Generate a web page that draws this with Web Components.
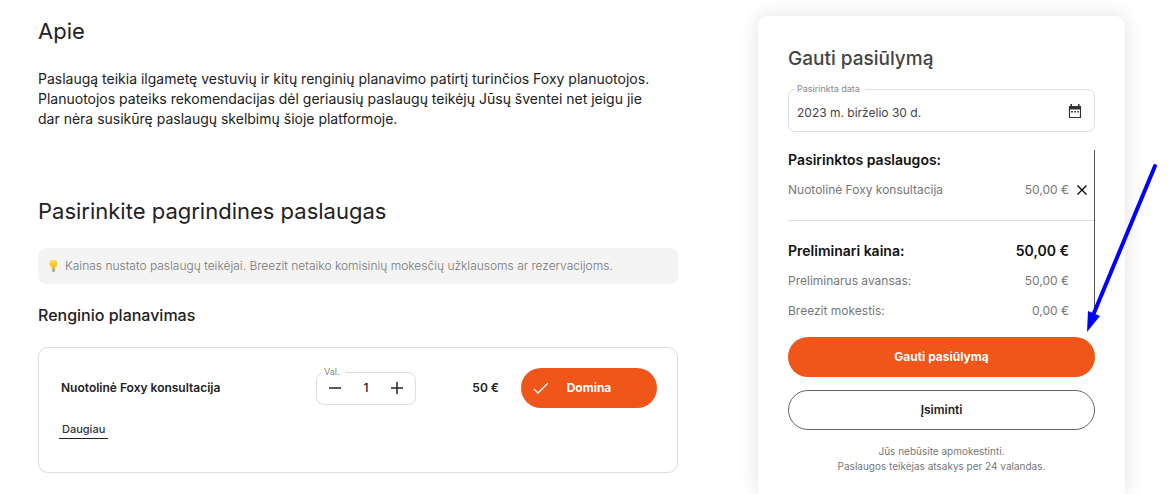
<!DOCTYPE html>
<html lang="lt">
<head>
<meta charset="utf-8">
<meta name="viewport" content="width=device-width, initial-scale=1">
<title>Foxy konsultacija</title>
<style>
  body { margin: 0; background: #fff; color: #222; font-family: Inter, "Liberation Sans", sans-serif; font-size: 12px; line-height: 20px; }
</style>
</head>
<body>
<offer-page>
  <text-section heading="Apie">Paslaugą teikia ilgametę vestuvių ir kitų renginių planavimo patirtį turinčios Foxy planuotojos.<br>Planuotojos pateiks rekomendacijas dėl geriausių paslaugų teikėjų Jūsų šventei net jeigu jie<br>dar nėra susikūrę paslaugų skelbimų šioje platformoje.</text-section>
  <service-group>
    <span slot="heading">Pasirinkite pagrindines paslaugas</span>
    <info-note slot="note">Kainas nustato paslaugų teikėjai. Breezit netaiko komisinių mokesčių užklausoms ar rezervacijoms.</info-note>
    <span slot="category">Renginio planavimas</span>
    <service-card price="50 €" action="Domina">Nuotolinė Foxy konsultacija</service-card>
  </service-group>
  <quote-card slot="aside">
    <span slot="heading">Gauti pasiūlymą</span>
    <date-field slot="date" label="Pasirinkta data" value="2023 m. birželio 30 d."></date-field>
    <price-line slot="items" removable amount="50,00 €">Nuotolinė Foxy konsultacija</price-line>
    <price-line slot="totals" strong amount="50,00 €">Preliminari kaina:</price-line>
    <price-line slot="totals" amount="50,00 €">Preliminarus avansas:</price-line>
    <price-line slot="totals" amount="0,00 €">Breezit mokestis:</price-line>
    <pill-button slot="actions">Gauti pasiūlymą</pill-button>
    <pill-button slot="actions" outlined>Įsiminti</pill-button>
    <span slot="footnote">Jūs nebūsite apmokestinti.<br>Paslaugos teikėjas atsakys per 24 valandas.</span>
  </quote-card>
</offer-page>

<script>
const define = (name, markup, setup) => {
  const template = document.createElement('template');
  template.innerHTML = markup;
  customElements.define(name, class extends HTMLElement {
    constructor() {
      super();
      this.attachShadow({ mode: 'open' }).append(template.content.cloneNode(true));
    }
    connectedCallback() {
      if (setup) setup(this, selector => this.shadowRoot.querySelector(selector));
    }
  });
};

define('offer-page', `
  <style>
    :host { display: grid; grid-template-columns: minmax(0, 1fr) 367px; column-gap: 80px; box-sizing: border-box; min-height: 100vh; padding: 16px 48px 0 38px; }
    @media (max-width: 900px) { :host { grid-template-columns: minmax(0, 1fr); row-gap: 32px; padding: 16px; } }
  </style>
  <main><slot></slot></main>
  <slot name="aside"></slot>`);

define('text-section', `
  <style>
    :host { display: block; }
    h2 { margin: 0 0 23px; font-size: 22px; line-height: 30px; font-weight: 400; }
    p { margin: 0; font-size: 14px; line-height: 20px; }
  </style>
  <h2></h2><p><slot></slot></p>`,
  (host, $) => { $('h2').textContent = host.getAttribute('heading'); });

define('service-group', `
  <style>
    :host { display: block; margin-top: 67px; }
    h2 { margin: 0 0 22px; font-size: 22px; line-height: 30px; font-weight: 400; }
    h3 { margin: 19px 0 20px; font-size: 16px; line-height: 24px; font-weight: 500; }
  </style>
  <h2><slot name="heading"></slot></h2>
  <slot name="note"></slot>
  <h3><slot name="category"></slot></h3>
  <slot></slot>`);

define('info-note', `
  <style>
    :host { display: flex; align-items: center; gap: 6px; padding: 8px 10px; border-radius: 8px; background: #f4f4f4; color: #777; font-size: 12px; line-height: 20px; font-weight: 300; }
    svg { flex: none; }
  </style>
  <svg width="11" height="14" viewBox="0 0 11 14" aria-hidden="true">
    <path d="M5.500 1a4 4 0 0 0-4 4c0 2 1.900 2.700 2.200 5h3.600c.3-2.300 2.200-3 2.200-5a4 4 0 0 0-4-4z" fill="#fccb38"/>
    <path d="M4 3.200a2 2 0 0 1 2-1" stroke="#fff0a0" fill="none"/>
    <path d="M4.600 6.500l.9 1 .9-1M5.500 7.500V10" stroke="#d79b20" stroke-width=".6" fill="none"/>
    <path d="M3.900 10h3.200v2l-1 1H4.900l-1-1z" fill="#a4a9ad"/>
  </svg>
  <span><slot></slot></span>`);

define('quantity-stepper', `
  <style>
    :host { display: block; position: relative; box-sizing: border-box; height: 33px; border: 1px solid #ddd; border-radius: 8px; }
    label { position: absolute; top: -8px; left: 5px; padding: 0 6px 0 2px; background: #fff; color: #888; font-size: 9px; line-height: 14px; font-weight: 400; }
    div { display: grid; grid-template-columns: 36px 1fr 36px; align-items: center; height: 100%; }
    button { display: grid; place-items: center; height: 31px; padding: 0; border: 0; background: none; color: #222; }
    input { width: 100%; min-width: 0; box-sizing: border-box; padding: 0; border: 0; background: none; font: 500 12px/20px Inter, sans-serif; color: #222; text-align: center; }
  </style>
  <label for="count">Val.</label>
  <div>
    <button type="button" aria-label="Mažiau"><svg width="14" height="14"><path d="M1 7h12" stroke="currentColor" stroke-width="1.500"/></svg></button>
    <input id="count" value="1" inputmode="numeric">
    <button type="button" aria-label="Daugiau"><svg width="14" height="14"><path d="M1 7h12M7 1v12" stroke="currentColor" stroke-width="1.500"/></svg></button>
  </div>`,
  (host, $) => {
    const [minus, plus] = host.shadowRoot.querySelectorAll('button');
    const input = $('input');
    minus.onclick = () => { input.value = Math.max(1, Number(input.value) - 1); };
    plus.onclick = () => { input.value = Number(input.value) + 1; };
  });

define('service-card', `
  <style>
    :host { display: block; box-sizing: border-box; min-height: 126px; padding: 20px; border: 1px solid #ddd; border-radius: 10px; }
    .row { display: grid; grid-template-columns: minmax(0, 1fr) 100px 61px 136px; column-gap: 22px; align-items: center; font-weight: 600; }
    .name { padding-left: 2px; }
    .price { text-align: right; }
    a { display: inline-block; margin-top: 12px; padding: 0 3px; border-bottom: 1px solid #222; color: #333; font-size: 11px; line-height: 18px; font-weight: 500; text-decoration: none; }
  </style>
  <div class="row">
    <span class="name"><slot></slot></span>
    <quantity-stepper></quantity-stepper>
    <span class="price"></span>
    <pill-button checked></pill-button>
  </div>
  <a href="#daugiau">Daugiau</a>`,
  (host, $) => {
    $('.price').textContent = host.getAttribute('price');
    $('pill-button').textContent = host.getAttribute('action');
  });

define('pill-button', `
  <style>
    :host { display: block; }
    button { display: flex; align-items: center; justify-content: center; width: 100%; height: 40px; padding: 0 12px; border: 0; border-radius: 20px; background: #f05519; color: #fff; font: 700 12px/20px Inter, sans-serif; cursor: pointer; }
    svg { display: none; flex: none; }
    :host([outlined]) button { border: 1px solid #666; background: #fff; color: #222; font-weight: 600; }
    :host([checked]) svg { display: block; }
    :host([checked]) span { flex: 1; padding-right: 16px; }
  </style>
  <button type="button"><svg width="16" height="14" viewBox="0 0 16 14" aria-hidden="true"><path d="M1 8l4 4L15 2" fill="none" stroke="#fff" stroke-width="1.300"/></svg><span><slot></slot></span></button>`);

define('date-field', `
  <style>
    :host { display: flex; align-items: center; position: relative; box-sizing: border-box; height: 43px; padding: 2px 12px 0 8px; border: 1px solid #ddd; border-radius: 7px; }
    label { position: absolute; top: -8px; left: 6px; padding: 0 5px 0 2px; background: #fff; color: #888; font-size: 9px; line-height: 14px; }
    input { flex: 1; min-width: 0; padding: 2px 0 0; border: 0; background: none; font: 400 12px/20px Inter, sans-serif; color: #444; }
    svg { flex: none; }
  </style>
  <label for="date"></label>
  <input id="date" type="text">
  <svg width="14" height="15" viewBox="0 0 14 15" aria-hidden="true">
    <path d="M1.500 2.500h11v11h-11z" fill="none" stroke="#333" stroke-width="1.200" stroke-linejoin="round"/>
    <path d="M1 2h12v3.500H1zM2.500 0h1.500v2H2.500zM10 0h1.500v2H10z" fill="#333"/>
    <path d="M3 7h2v1.500H3zM6 7h2v1.500H6zM9 7h2v1.500H9z" fill="#555"/>
  </svg>`,
  (host, $) => {
    $('label').textContent = host.getAttribute('label');
    $('input').value = host.getAttribute('value');
  });

define('price-line', `
  <style>
    :host { display: grid; grid-template-columns: minmax(0, 1fr) auto 25px; align-items: center; color: #777; font-size: 12px; line-height: 20px; }
    :host([strong]) { color: #111; font-size: 14px; font-weight: 600; }
    button { display: none; height: 20px; padding: 0; border: 0; background: none; color: #000; }
    :host([removable]) button { display: grid; place-items: center; }
  </style>
  <span><slot></slot></span><span class="amount"></span>
  <button type="button" aria-label="Pašalinti"><svg width="10" height="10"><path d="M.5.5l9 9M9.500.5l-9 9" stroke="currentColor" stroke-width="1.300"/></svg></button>`,
  (host, $) => { $('.amount').textContent = host.getAttribute('amount'); });

define('pointer-arrow', `
  <style>:host { display: block; } svg { display: block; }</style>
  <svg width="74" height="172" viewBox="0 0 74 172" aria-hidden="true">
    <path d="M70 5L9 152" stroke="#00f" stroke-width="4" stroke-linecap="round"/>
    <path d="M2 171L3 150L15 155z" fill="#00f"/>
  </svg>`);

define('quote-card', `
  <style>
    :host { display: block; position: relative; box-sizing: border-box; padding: 28px 30px 20px; border-radius: 10px 10px 0 0; background: #fff; box-shadow: 0 0 20px rgba(0, 0, 0, .12); }
    h2 { margin: 0 0 15px; color: #444; font-size: 19px; line-height: 30px; font-weight: 500; }
    section { margin: 18px 0 16px; border-right: 1px solid #555; }
    h3 { margin: 0 0 10px; color: #111; font-size: 14px; line-height: 20px; font-weight: 600; }
    .totals { display: grid; gap: 10px; margin-top: 20px; padding-top: 20px; border-top: 1px solid #ddd; }
    .actions { display: grid; gap: 13px; }
    p { margin: 14px 0 0; color: #777; font-size: 10px; line-height: 15px; text-align: center; }
    pointer-arrow { position: absolute; top: 145px; left: 327px; pointer-events: none; }
  </style>
  <h2><slot name="heading"></slot></h2>
  <slot name="date"></slot>
  <section>
    <h3>Pasirinktos paslaugos:</h3>
    <slot name="items"></slot>
    <div class="totals"><slot name="totals"></slot></div>
  </section>
  <div class="actions"><slot name="actions"></slot></div>
  <p><slot name="footnote"></slot></p>
  <pointer-arrow></pointer-arrow>`);
</script>
</body>
</html>
